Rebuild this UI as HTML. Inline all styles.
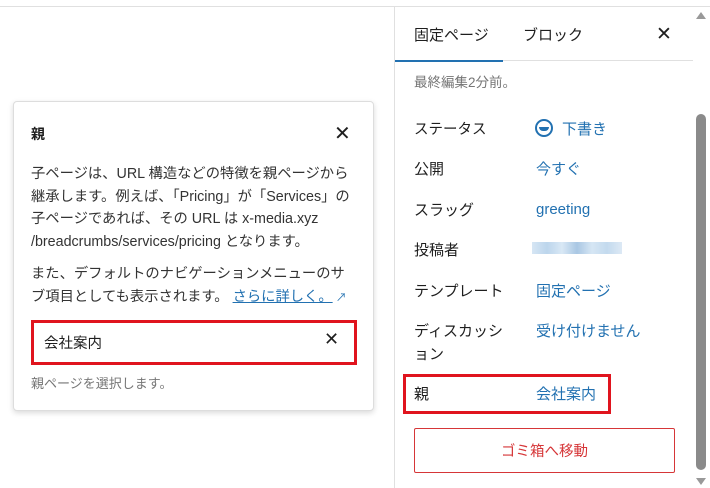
<!DOCTYPE html>
<html><head><meta charset="utf-8"><style>
*{margin:0;padding:0;box-sizing:border-box}
body{width:710px;height:488px;background:#fff;position:relative;overflow:hidden;font-family:"Liberation Sans","Noto Sans CJK JP",sans-serif;color:#1e1e1e;font-size:14px}
.a{position:absolute;white-space:nowrap}
.blue{color:#2271b1}
</style></head><body>
<div class="a" style="left:0;top:6px;width:710px;height:1px;background:#e0e0e0"></div>
<div class="a" style="left:394px;top:7px;width:1px;height:481px;background:#e0e0e0"></div>
<!-- popover -->
<div class="a" style="left:13px;top:101px;width:361px;height:310px;border:1px solid #ddd;border-radius:4px;box-shadow:0 2px 6px rgba(0,0,0,.15);background:#fff"></div>
<div class="a" style="left:31px;top:124px;font-size:14px;font-weight:bold">親</div>
<div class="a" style="left:334px;top:121px;font-size:20px">✕</div>
<div class="a" style="left:31px;top:163px;font-size:14.3px;line-height:22.7px;color:#333">子ページは、URL 構造などの特徴を親ページから<br>継承します。例えば、「Pricing」が「Services」の<br>子ページであれば、その URL は x-media.xyz<br>/breadcrumbs/services/pricing となります。</div>
<div class="a" style="left:31px;top:263px;font-size:14.3px;line-height:22.7px;color:#333">また、デフォルトのナビゲーションメニューのサ<br>ブ項目としても表示されます。 <span class="blue" style="text-decoration:underline">さらに詳しく。</span><span class="blue" style="font-size:11px"> ↗</span></div>
<div class="a" style="left:31px;top:320px;width:326px;height:45px;border:3px solid #e0141e"></div>
<div class="a" style="left:44px;top:332px;font-size:14.5px">会社案内</div>
<div class="a" style="left:324px;top:329px;font-size:18px">✕</div>
<div class="a" style="left:31px;top:373px;font-size:13px;color:#757575">親ページを選択します。</div>
<!-- sidebar -->
<div class="a" style="left:414px;top:24px;font-size:15px">固定ページ</div>
<div class="a" style="left:523px;top:24px;font-size:15px">ブロック</div>
<div class="a" style="left:656px;top:23px;font-size:19px">✕</div>
<div class="a" style="left:395px;top:60px;width:108px;height:2px;background:#2271b1"></div>
<div class="a" style="left:503px;top:60px;width:190px;height:1px;background:#e0e0e0"></div>
<div class="a" style="left:414px;top:71px;font-size:13.5px;color:#757575">最終編集2分前。</div>
<div class="a" style="left:414px;top:118px;font-size:14.5px">ステータス</div>
<div class="a" style="left:535px;top:119px;width:18px;height:18px;border:2px solid #2271b1;border-radius:50%;overflow:hidden"><div style="position:absolute;left:2px;top:6px;width:10px;height:4px;background:#2271b1;border-radius:0 0 5px 5px"></div></div>
<div class="a blue" style="left:562px;top:118px;font-size:15px">下書き</div>
<div class="a" style="left:414px;top:158px;font-size:15px">公開</div>
<div class="a blue" style="left:536px;top:158px;font-size:15px">今すぐ</div>
<div class="a" style="left:414px;top:199px;font-size:15px">スラッグ</div>
<div class="a blue" style="left:536px;top:201px;font-size:15px">greeting</div>
<div class="a" style="left:414px;top:239px;font-size:15px">投稿者</div>
<div class="a" style="left:532px;top:242px;width:90px;height:12px;background:linear-gradient(90deg,#d6e6f4,#bcd5ec,#d9e8f5,#a9c7e3,#d6e6f4,#c3daee,#dde9f5)"></div>
<div class="a" style="left:414px;top:280px;font-size:15px">テンプレート</div>
<div class="a blue" style="left:536px;top:280px;font-size:15px">固定ページ</div>
<div class="a" style="left:414px;top:320px;font-size:15px;line-height:23px">ディスカッシ<br>ョン</div>
<div class="a blue" style="left:536px;top:320px;font-size:15px">受け付けません</div>
<div class="a" style="left:403px;top:374px;width:208px;height:40px;border:3px solid #e0141e"></div>
<div class="a" style="left:414px;top:383px;font-size:15px">親</div>
<div class="a blue" style="left:536px;top:383px;font-size:15px">会社案内</div>
<div class="a" style="left:414px;top:428px;width:261px;height:45px;border:1px solid #d63638;border-radius:2px;color:#d63638;font-size:14.5px;text-align:center;line-height:47px">ゴミ箱へ移動</div>
<!-- scrollbar -->
<div class="a" style="left:696px;top:12px;width:0;height:0;border-left:5px solid transparent;border-right:5px solid transparent;border-bottom:7px solid #999"></div>
<div class="a" style="left:696px;top:114px;width:10px;height:356px;background:#8a8a8a;border-radius:5px"></div>
<div class="a" style="left:696px;top:478px;width:0;height:0;border-left:5px solid transparent;border-right:5px solid transparent;border-top:7px solid #999"></div>
</body></html>
